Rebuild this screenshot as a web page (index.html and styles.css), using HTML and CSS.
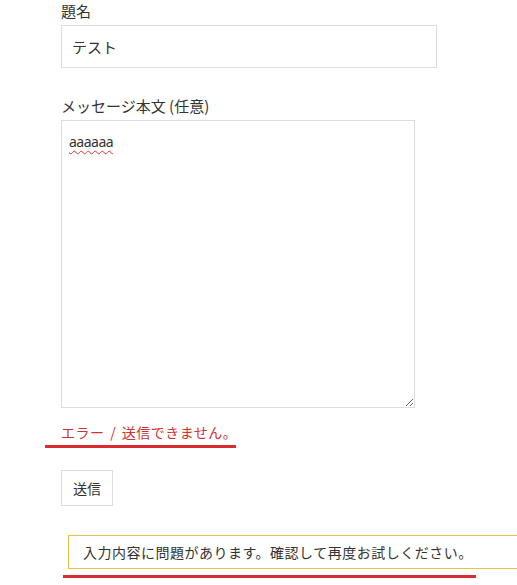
FILE: index.html
```html
<!DOCTYPE html>
<html lang="ja">
<head>
  <meta charset="UTF-8">
  <title>お問い合わせ</title>
  <link rel="stylesheet" href="styles.css">
</head>
<body>

  <form class="contact-form" onsubmit="return false;">

    <label class="field">
      <span class="field-label">題名</span>
      <input type="text" class="text-input" value="テスト">
    </label>

    <label class="field field-message">
      <span class="field-label">メッセージ本文 (任意)</span>
      <span class="textarea-wrap">
        <textarea class="text-area" spellcheck="false">aaaaaa</textarea>
        <span class="spell-mark">aaaaaa</span>
      </span>
    </label>

    <p class="error-tip">エラー / 送信できません。</p>
    <div class="mark mark-error"></div>

    <button type="submit" class="submit-btn">送信</button>

    <div class="response-output">入力内容に問題があります。確認して再度お試しください。</div>
    <div class="mark mark-response"></div>

  </form>

</body>
</html>
```

FILE: styles.css
```css
body {
  font-family: "Noto Sans CJK JP", "Noto Sans", sans-serif;
  color: #333;
  margin: 0;
  padding: 0;
  overflow: hidden;
}

.contact-form {
  padding-left: 61px;
}

.field {
  display: block;
}

.field-label {
  display: block;
  font-size: 15px;
  line-height: 22px;
  height: 25px;
}

.text-input {
  display: block;
  width: 376px;
  height: 43px;
  box-sizing: border-box;
  border: 1px solid #ddd;
  padding: 0 10px;
  font-family: inherit;
  font-size: 15px;
  color: #333;
  outline: none;
}

.field-message {
  margin-top: 27px;
}

.field-message .field-label {
  height: 25px;
}

.textarea-wrap {
  display: block;
  position: relative;
  width: 354px;
}

.text-area {
  display: block;
  width: 354px;
  height: 288px;
  box-sizing: border-box;
  border: 1px solid #ddd;
  padding: 10px 7px;
  margin: 0;
  font-family: "Noto Sans", sans-serif;
  font-size: 14px;
  line-height: 22px;
  letter-spacing: -0.5px;
  color: #333;
  outline: none;
  resize: vertical;
}

.spell-mark {
  position: absolute;
  left: 8px;
  top: 11px;
  font-family: "Noto Sans", sans-serif;
  font-size: 14px;
  line-height: 22px;
  letter-spacing: -0.5px;
  color: transparent;
  text-decoration: underline wavy #e03030;
  text-decoration-thickness: 1px;
  text-underline-offset: 3px;
  pointer-events: none;
}

.error-tip {
  margin: 14px 0 0;
  font-size: 14px;
  line-height: 20px;
  color: #cc3333;
  letter-spacing: 0.5px;
  word-spacing: 2px;
}

.mark {
  height: 3px;
  background: #d92b30;
}

.mark-error {
  width: 191px;
  margin: 3px 0 0 -16px;
}

.submit-btn {
  display: block;
  margin-top: 22px;
  width: 52px;
  height: 36px;
  padding: 0;
  background: #fff;
  border: 1px solid #ddd;
  font-family: inherit;
  font-size: 14px;
  color: #333;
}

.response-output {
  margin: 29px -8px 0 7px;
  height: 34px;
  box-sizing: border-box;
  border: 1px solid #e6c34a;
  border-right: none;
  padding-left: 14px;
  font-size: 14px;
  line-height: 32px;
  letter-spacing: 0.5px;
  color: #333;
}

.mark-response {
  width: 413px;
  margin: 6px 0 0 2px;
}
```
